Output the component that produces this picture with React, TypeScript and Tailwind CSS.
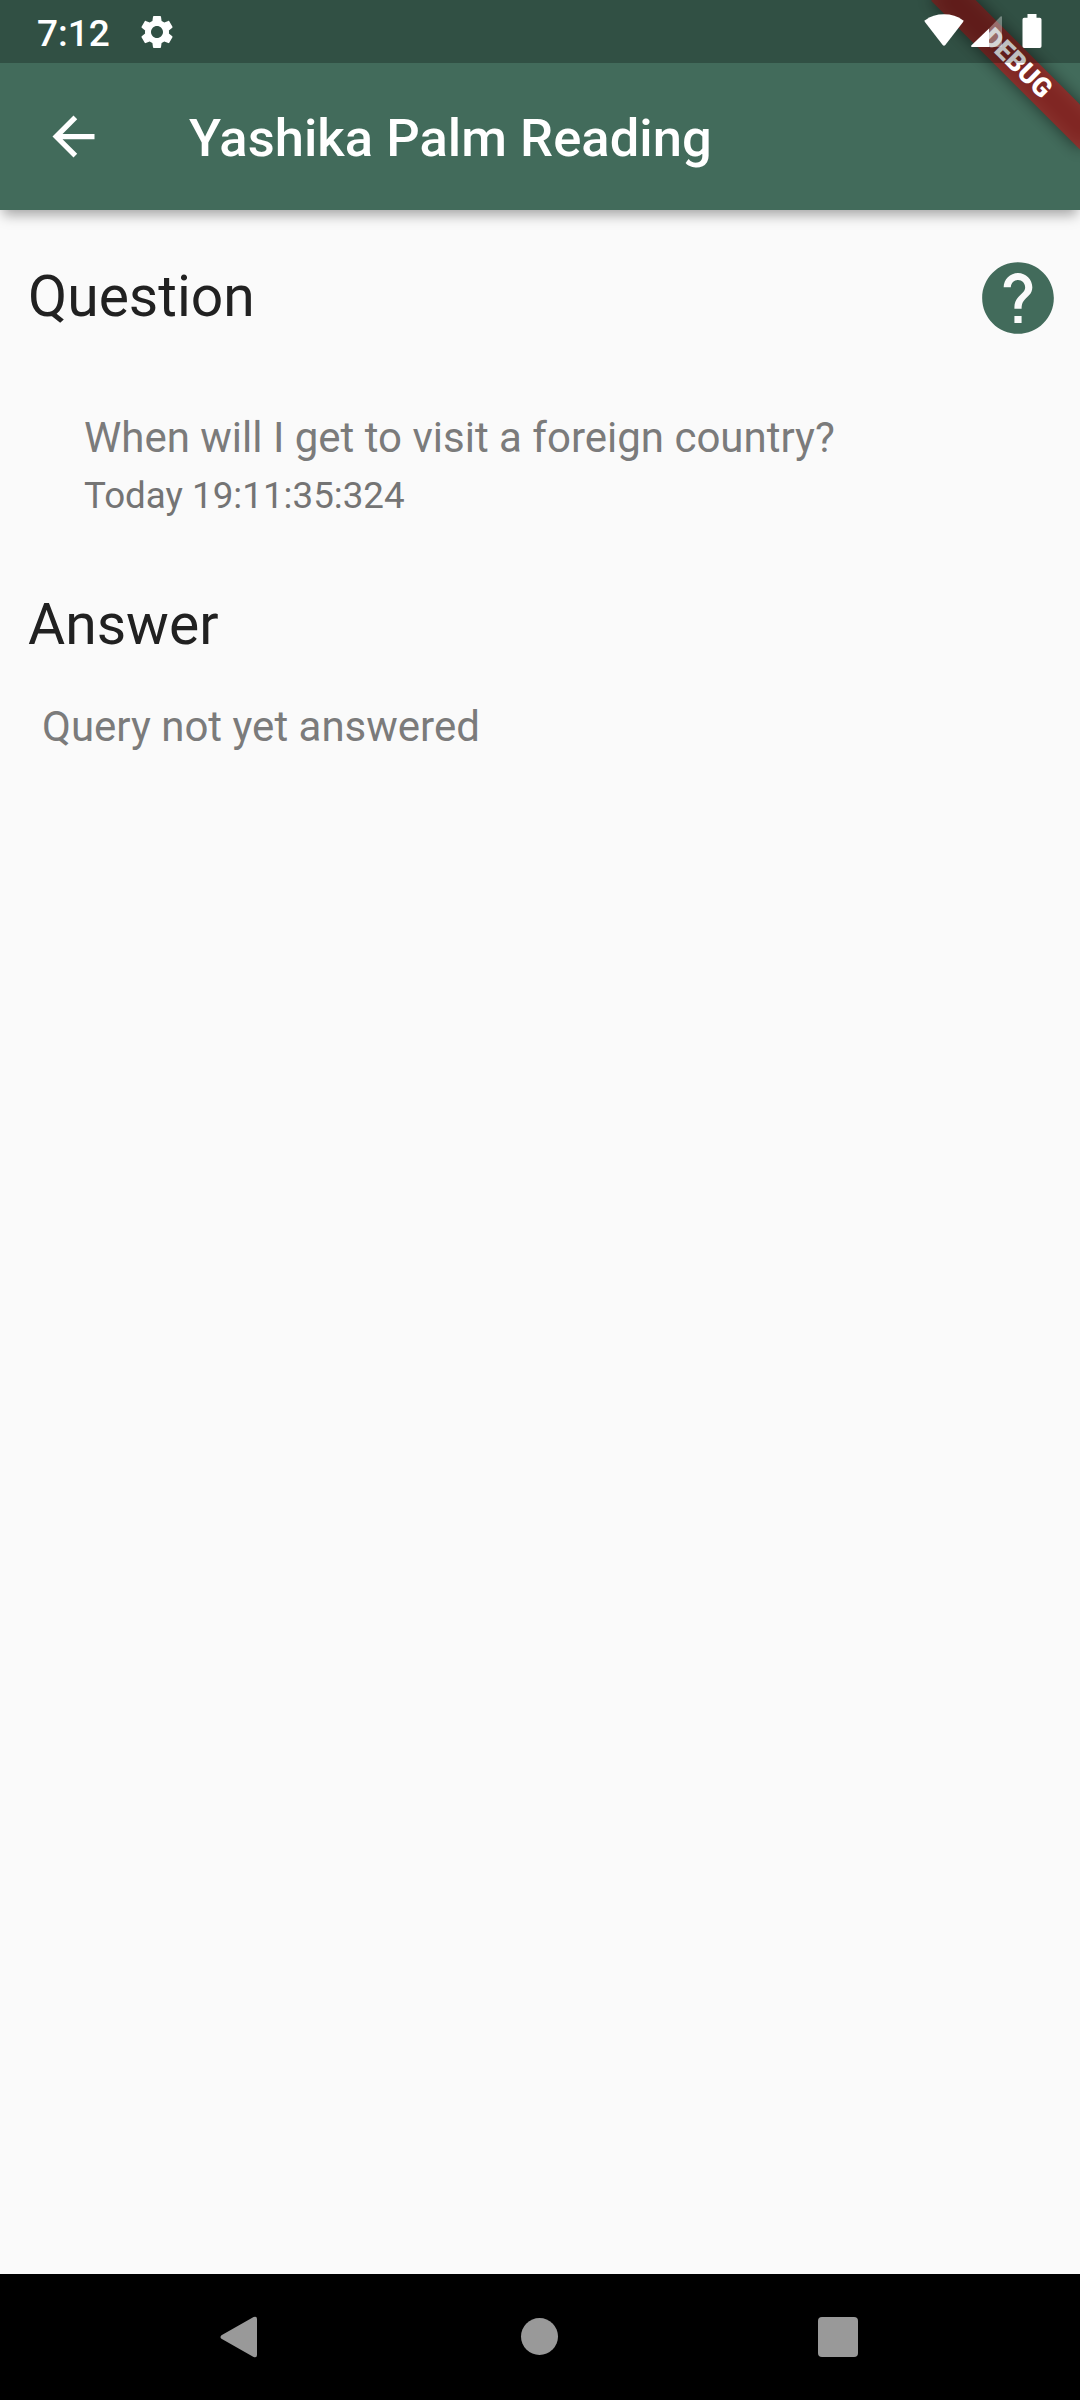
import React from "react";

function DebugBanner() {
  return (
    <div className="pointer-events-none absolute top-0 right-0 h-[200px] w-[220px] overflow-hidden">
      <div className="absolute top-[73.5px] left-[115px] h-[31.5px] w-[210px] origin-[105px_-73.5px] rotate-45">
        <div className="absolute inset-0 bg-black/50 blur-[8px]" />
        <div className="relative flex h-full items-center justify-center bg-[#b71c1c]/63 text-[26.8px] leading-none font-black text-white">
          DEBUG
        </div>
      </div>
    </div>
  );
}

function StatusBar() {
  return (
    <div className="relative flex h-[63px] items-start bg-black/25 text-white">
      <span className="mt-[12px] ml-[37px] text-[37px] leading-[44px] font-medium">7:12</span>
      <svg className="mt-[12px] ml-[27px] size-[40px]" viewBox="0 0 24 24" fill="currentColor">
        <path d="M19.14 12.94c.04-.3.06-.61.06-.94 0-.32-.02-.64-.07-.94l2.03-1.58c.18-.14.23-.41.12-.61l-1.92-3.32c-.12-.22-.37-.29-.59-.22l-2.39.96c-.5-.38-1.03-.7-1.62-.94l-.36-2.54c-.04-.24-.24-.41-.48-.41h-3.84c-.24 0-.43.17-.47.41l-.36 2.54c-.59.24-1.13.57-1.62.94l-2.39-.96c-.22-.08-.47 0-.59.22L2.74 8.87c-.12.21-.08.47.12.61l2.03 1.58c-.05.3-.09.63-.09.94s.02.64.07.94l-2.03 1.58c-.18.14-.23.41-.12.61l1.92 3.32c.12.22.37.29.59.22l2.39-.96c.5.38 1.03.7 1.62.94l.36 2.54c.05.24.24.41.48.41h3.84c.24 0 .44-.17.47-.41l.36-2.54c.59-.24 1.13-.56 1.62-.94l2.39.96c.22.08.47 0 .59-.22l1.92-3.32c.12-.22.07-.47-.12-.61l-2.01-1.58zM12 15.6c-1.98 0-3.6-1.62-3.6-3.6s1.62-3.6 3.6-3.6 3.6 1.62 3.6 3.6-1.62 3.6-3.6 3.6z" />
      </svg>
      <div className="mt-[14px] mr-[38px] ml-auto flex">
        <svg className="h-[34px] w-[40px]" viewBox="0 0 40 34" fill="currentColor">
          <path d="M1.1 6.2Q9 .3 20 .3t18.900 5.900q1 .8.2 1.900L21.300 31q-1.300 1.300-2.600 0L.9 8.100Q.1 7 1.100 6.200Z" />
        </svg>
        <svg className="ml-[7px] h-[34px] w-[31px]" viewBox="0 0 31 34" fill="currentColor">
          <path d="M18 14.500V33H1Q-.6 32.500.5 31.200Z" />
          <path opacity=".35" d="M18 14.500 29.500 2.600Q31 1.600 31 3V31.500Q31 33 29.500 33H18Z" />
        </svg>
        <svg className="ml-[20px] h-[34px] w-[20px]" viewBox="0 0 20 34" fill="currentColor">
          <path d="M5.500 0h9v3.700h3.300q1.700 0 1.700 1.700v26.900q0 1.700-1.700 1.700H2.200Q.5 34 .5 32.300V5.400q0-1.700 1.700-1.700h3.300Z" />
        </svg>
      </div>
    </div>
  );
}

function AppBar() {
  return (
    <header className="relative z-10 h-[210px] shrink-0 bg-[#426b5b] shadow-[0_8px_12px_-3px_rgba(0,0,0,0.34)]">
      <DebugBanner />
      <StatusBar />
      <div className="flex h-[147px] items-center pl-[42px] text-white">
        <svg className="size-[63px]" viewBox="0 0 24 24" fill="currentColor">
          <path d="M20 11H7.830l5.590-5.590L12 4l-8 8 8 8 1.410-1.410L7.830 13H20v-2z" />
        </svg>
        <h1 className="mt-[3px] ml-[84px] text-[52.5px] leading-[62px] font-medium tracking-[0.04px]">
          Yashika Palm Reading
        </h1>
      </div>
    </header>
  );
}

function NavBar() {
  return (
    <nav className="flex h-[126px] shrink-0 items-start bg-black pl-[220px] text-[#999999]">
      <svg className="mt-[42px] h-[42px] w-[37px]" viewBox="0 0 38 42" fill="currentColor">
        <path d="M1.500 19.200 34.500.5Q38-.8 38 2.500v37q0 3.300-3.500 2L1.500 22.800q-2-1.800 0-3.600Z" />
      </svg>
      <div className="mt-[44px] ml-[264px] size-[37px] rounded-full bg-[#999999]" />
      <div className="mt-[43px] ml-[260px] size-[40px] rounded-[4px] bg-[#999999]" />
    </nav>
  );
}

export default function App() {
  return (
    <div className="flex h-[2400px] w-[1080px] flex-col overflow-hidden bg-[#fafafa] font-[Roboto,sans-serif]">
      <AppBar />
      <main className="flex-1 pt-[44px]">
        <section>
          <div className="flex h-[87px] items-start justify-between pr-[19px] pl-[28px]">
            <h2 className="mt-[9px] text-[57px] leading-[68px] text-[#212121]">Question</h2>
            <svg className="mt-px size-[86px]" viewBox="0 0 24 24" fill="#426b5b">
              <path d="M12 2C6.480 2 2 6.480 2 12s4.480 10 10 10 10-4.480 10-10S17.520 2 12 2zm1 17h-2v-2h2v2zm2.070-7.750-.9.920C13.450 12.900 13 13.500 13 15h-2v-.5c0-1.100.45-2.100 1.170-2.830l1.240-1.260c.37-.36.59-.86.59-1.410 0-1.100-.9-2-2-2s-2 .9-2 2H8c0-2.210 1.790-4 4-4s4 1.790 4 4c0 .88-.36 1.680-.93 2.250z" />
            </svg>
          </div>
          <div className="mt-[72px] pl-[84px] text-[#7b7b7b]">
            <p className="text-[42px] leading-[50px]">When will I get to visit a foreign country?</p>
            <p className="mt-[11px] text-[36.75px] leading-[44px] text-[#747474]">Today 19:11:35:324</p>
          </div>
        </section>
        <section className="mt-[73px]">
          <h2 className="pl-[28px] text-[57px] leading-[68px] text-[#212121]">Answer</h2>
          <p className="mt-[43px] pl-[42px] text-[42px] leading-[50px] text-[#7b7b7b]">Query not yet answered</p>
        </section>
      </main>
      <NavBar />
    </div>
  );
}
